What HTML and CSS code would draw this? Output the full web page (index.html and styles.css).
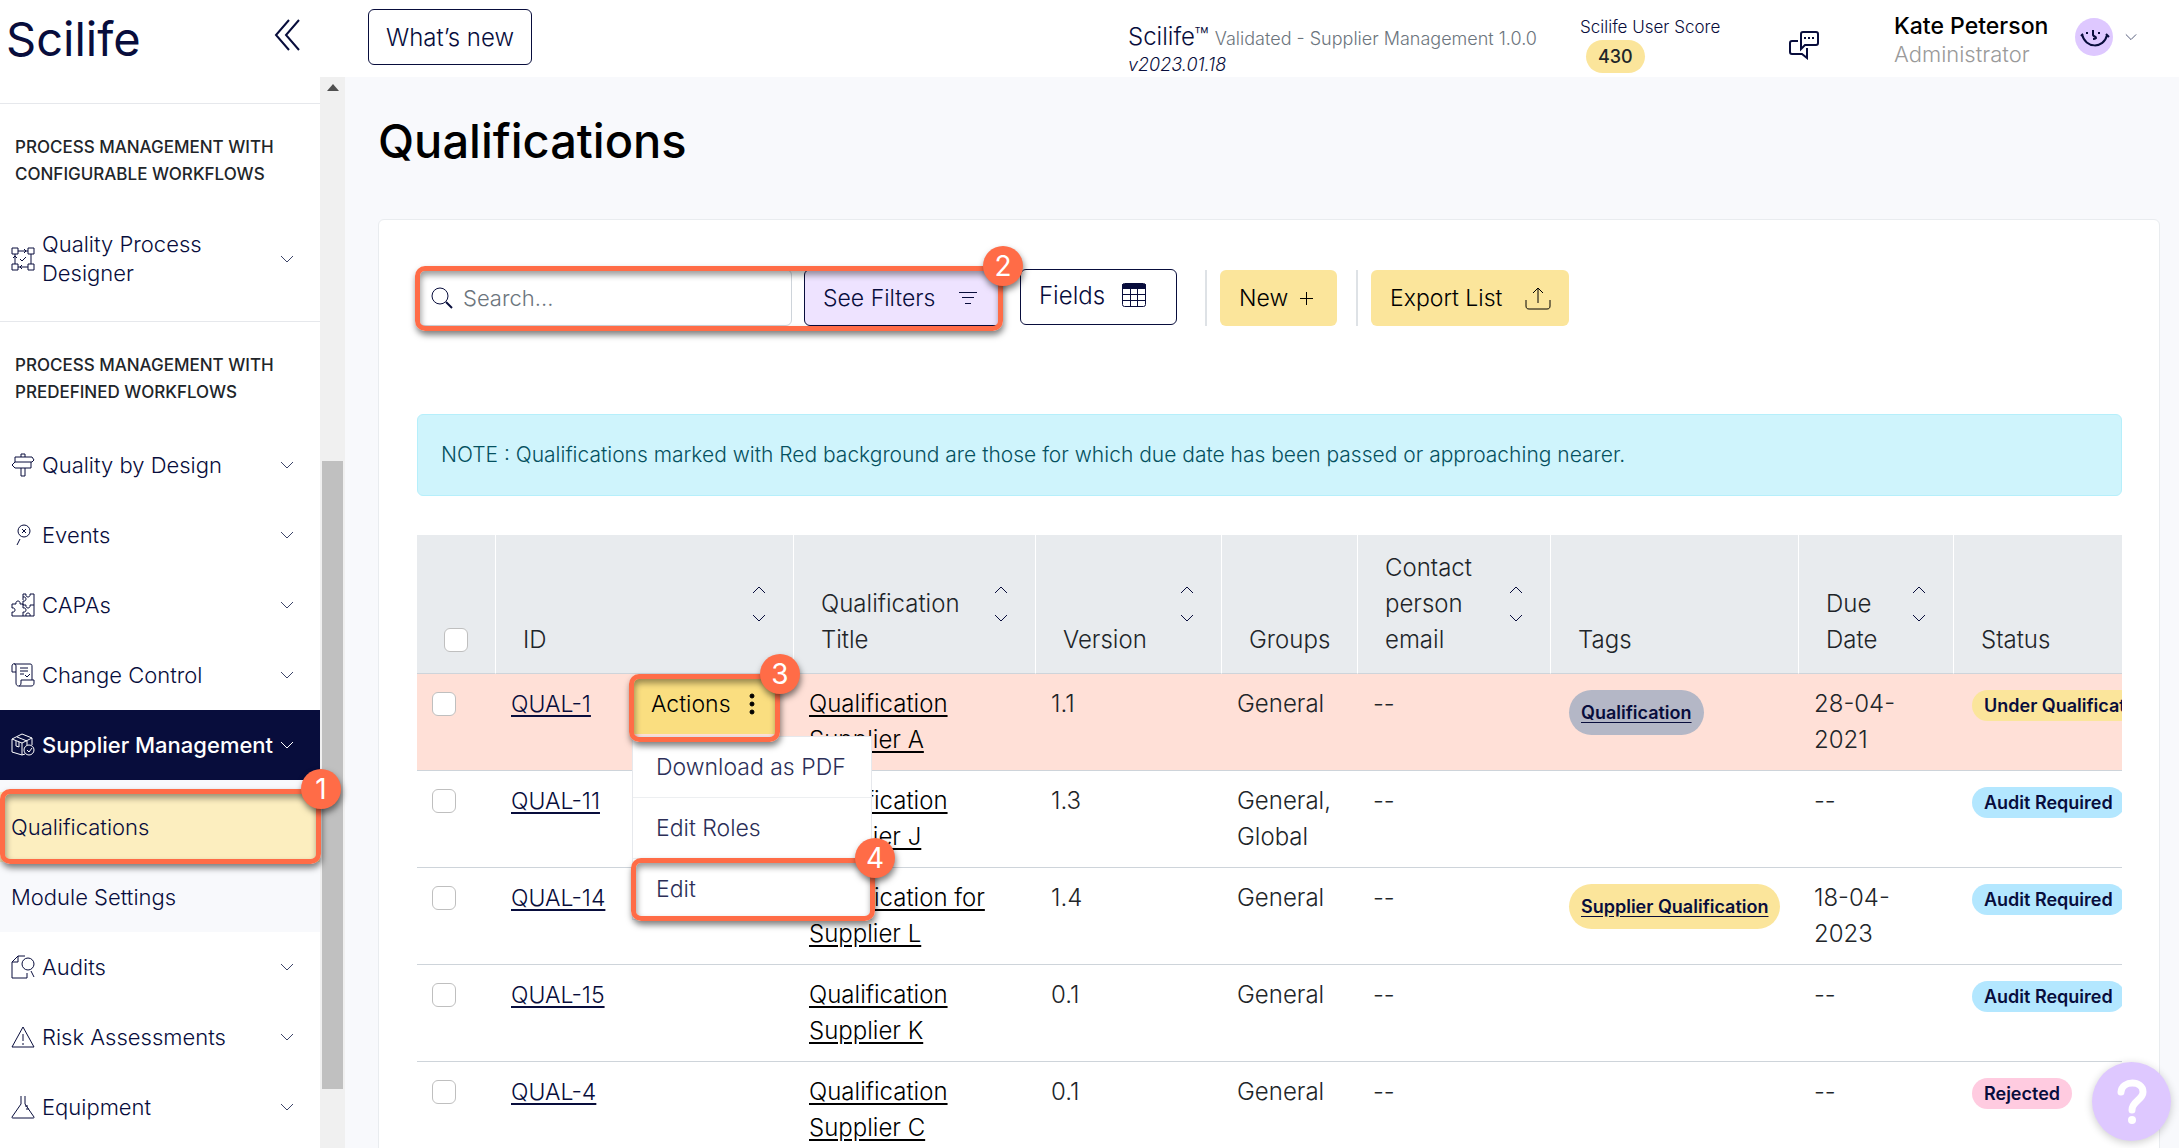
FILE: index.html
```html
<!DOCTYPE html>
<html lang="en">

<head>
    <meta charset="UTF-8">
    <meta name="viewport" content="width=device-width, initial-scale=1.0">
    <title>Scilife - Qualifications</title>
    <link rel="stylesheet" href="styles.css">
</head>

<body>
    <!-- shared icon shapes -->
    <svg class="sprite" width="0" height="0" aria-hidden="true">
        <symbol id="down" viewBox="0 0 14 8"><path d="M1 1l6 6 6-6" /></symbol>
        <symbol id="up" viewBox="0 0 14 8"><path d="M1 7l6-6 6 6" /></symbol>
    </svg>

    <header class="topbar">
        <div class="brand">
            <a href="#" class="logo">Scilife</a>
            <button class="icon-button" aria-label="Collapse menu">
                <svg width="26" height="32" viewBox="0 0 26 32"><path d="M15 1L2 16l13 15M25 1L12 16l13 15" /></svg>
            </button>
        </div>
        <button class="outline-button whats-new">What’s new</button>
        <div class="version">
            <div><span class="version-name">Scilife™</span> <span class="validated">Validated - Supplier Management 1.0.0</span></div>
            <em>v2023.01.18</em>
        </div>
        <div class="score">
            <div>Scilife User Score</div>
            <span class="score-value">430</span>
        </div>
        <button class="icon-button chat" aria-label="Messages">
            <svg width="32" height="30" viewBox="0 0 32 30">
                <path d="M15 2h13a2 2 0 0 1 2 2v9a2 2 0 0 1-2 2H17l-4 4V4a2 2 0 0 1 2-2z" />
                <path d="M10 11H4a2 2 0 0 0-2 2v9a2 2 0 0 0 2 2h10l5 4V18" />
                <path class="dots" d="M16 8h2M20 8h2M24 8h2" />
            </svg>
        </button>
        <div class="user">
            <div class="user-name">Kate Peterson</div>
            <div class="user-role">Administrator</div>
        </div>
        <button class="icon-button account" aria-label="Account">
            <svg class="avatar" width="38" height="38" viewBox="0 0 38 38">
                <circle cx="19" cy="19" r="19" />
                <path d="M6 18l2-2M31 16l3 3M7 16c3 15 22 15 25 1M12 14v2M24 14v2M18 12v5c1 2 3 1 3 3-1 1-2 1-3 1" />
            </svg>
            <svg class="chevron" width="12" height="8"><use href="#down" /></svg>
        </button>
    </header>

    <div class="page">
        <nav class="sidebar">
            <div class="menu-group">
                <h2>Process management with configurable workflows</h2>
                <a href="#" class="menu-item tall">
                    <svg width="24" height="24" viewBox="0 0 24 24"><path d="M1 1h6v6H1zM17 1h6v6h-6zM1 17h6v6H1zM17 17h6v6h-6zM7 4h10M13 2l2 2-2 2M20 7v10M17 20H7M11 18l-2 2 2 2M4 17V7M2 11l2-2 2 2M9 12l2 2 4-4" /></svg>
                    <span>Quality Process Designer</span>
                    <svg class="chevron" width="14" height="8"><use href="#down" /></svg>
                </a>
            </div>
            <div class="menu-group">
                <h2>Process management with predefined workflows</h2>
                <a href="#" class="menu-item">
                    <svg width="24" height="24" viewBox="0 0 24 24"><path d="M10 4V1h4v3M4 4h17l2 3-2 2H4zM20 9v6H4l-3-3 3-3M10 15v8h4v-8" /></svg>
                    <span>Quality by Design</span>
                    <svg class="chevron" width="14" height="8"><use href="#down" /></svg>
                </a>
                <a href="#" class="menu-item">
                    <svg width="24" height="24" viewBox="0 0 24 24"><circle cx="13" cy="8" r="6" /><path d="M11 6l4 4M15 6l-4 4M9 16l-3 6" /></svg>
                    <span>Events</span>
                    <svg class="chevron" width="14" height="8"><use href="#down" /></svg>
                </a>
                <a href="#" class="menu-item">
                    <svg width="24" height="24" viewBox="0 0 24 24"><path d="M12 7V1h3c-1 4 5 4 4 0h4v22H1v-4c4 1 4-5 0-4v-4h4c-1-4 5-4 4 0h3v4c4-1 4 5 0 4v4M12 12h3c-1 4 5 4 4 0h4M15 23c-1-4 5-4 4 0M12 4c4-1 4 5 0 4v4" /></svg>
                    <span>CAPAs</span>
                    <svg class="chevron" width="14" height="8"><use href="#down" /></svg>
                </a>
                <a href="#" class="menu-item">
                    <svg width="24" height="24" viewBox="0 0 24 24"><path d="M5 9H1V3c0-3 4-3 4 0v17c0 4 5 4 5 0v-3h13v3c0 2-1 3-3 3H8M3 1h16c2 0 2 1 2 3v13M9 5h8M9 8h8M9 11h4M14 12l2 2 3-3" /></svg>
                    <span>Change Control</span>
                    <svg class="chevron" width="14" height="8"><use href="#down" /></svg>
                </a>
                <a href="#" class="menu-item active">
                    <svg width="24" height="24" viewBox="0 0 24 24"><path d="M1 6l10-5 10 4-10 5zM1 6v13l10 3V10M21 5v7M6 4l10 4v4M5 8v5l3 1V9M11 22l3-1" /><circle cx="18" cy="17" r="5" /><path d="M16 17l2 2 3-4" /></svg>
                    <span>Supplier Management</span>
                    <svg class="chevron" width="14" height="8"><use href="#down" /></svg>
                </a>
                <div class="submenu">
                    <a href="#" class="current">Qualifications
                        <span class="callout"><b>1</b></span>
                    </a>
                    <a href="#">Module Settings</a>
                </div>
                <a href="#" class="menu-item">
                    <svg width="24" height="24" viewBox="0 0 24 24"><path d="M14 1H7L1 7v16h15v-5M7 1v6H1" /><circle cx="17" cy="9" r="6" /><path d="M20 16l3 6" /></svg>
                    <span>Audits</span>
                    <svg class="chevron" width="14" height="8"><use href="#down" /></svg>
                </a>
                <a href="#" class="menu-item">
                    <svg width="24" height="24" viewBox="0 0 24 24"><path d="M12 2L1 22h22zM12 9v7M12 18v2" /></svg>
                    <span>Risk Assessments</span>
                    <svg class="chevron" width="14" height="8"><use href="#down" /></svg>
                </a>
                <a href="#" class="menu-item">
                    <svg width="24" height="24" viewBox="0 0 24 24"><path d="M10 1v8L1 22c0 1 0 1 1 1h20c1 0 1 0 1-1L14 9V1M14 11h3M15 14h3" /></svg>
                    <span>Equipment</span>
                    <svg class="chevron" width="14" height="8"><use href="#down" /></svg>
                </a>
            </div>
        </nav>
        <div class="scrollbar">
            <svg width="12" height="8" viewBox="0 0 12 8"><path d="M0 8l6-7 6 7z" /></svg>
            <div class="thumb"></div>
        </div>

        <main class="content">
            <h1>Qualifications</h1>
            <section class="card">
                <div class="toolbar">
                    <div class="filters">
                        <label class="search">
                            <svg width="22" height="22" viewBox="0 0 22 22"><circle cx="9" cy="9" r="8" /><path class="handle" d="M15 15l6 6" /></svg>
                            <input type="text" placeholder="Search..." aria-label="Search">
                        </label>
                        <button class="see-filters">See Filters
                            <svg width="18" height="14" viewBox="0 0 18 14"><path d="M0 1.5h18M3 6.5h12M6 12.5h6" /></svg>
                        </button>
                        <span class="callout"><b>2</b></span>
                    </div>
                    <button class="outline-button fields">Fields
                        <svg width="26" height="26" viewBox="0 0 26 26"><rect x="1.5" y="1.5" width="23" height="23" rx="2" /><path class="solid" d="M1.5 2.5h23v4h-23z" /><path d="M1 12.5h24M1 18.5h24M9.5 7v18M16.5 7v18" /></svg>
                    </button>
                    <span class="divider"></span>
                    <button class="yellow-button">New
                        <svg width="13" height="13" viewBox="0 0 13 13"><path d="M6.5 0v13M0 6.5h13" /></svg>
                    </button>
                    <span class="divider"></span>
                    <button class="yellow-button export">Export List
                        <svg width="26" height="24" viewBox="0 0 26 24"><path d="M13 17V2M8 7l5-5 5 5M1 14v6c0 2 1 3 3 3h18c2 0 3-1 3-3v-6" /></svg>
                    </button>
                </div>

                <p class="note">NOTE : Qualifications marked with Red background are those for which due date has been passed or approaching nearer.</p>

                <div class="table-wrap">
                    <table>
                        <colgroup>
                            <col class="col-check">
                            <col class="col-id">
                            <col class="col-title">
                            <col class="col-version">
                            <col class="col-groups">
                            <col class="col-email">
                            <col class="col-tags">
                            <col class="col-due">
                            <col class="col-status">
                        </colgroup>
                        <thead>
                            <tr>
                                <th><input type="checkbox" aria-label="Select all"></th>
                                <th><div class="head">ID <button class="sort" aria-label="Sort by ID"><svg width="16" height="8"><use href="#up" /></svg><svg width="16" height="8"><use href="#down" /></svg></button></div></th>
                                <th><div class="head">Qualification Title <button class="sort" aria-label="Sort by title"><svg width="16" height="8"><use href="#up" /></svg><svg width="16" height="8"><use href="#down" /></svg></button></div></th>
                                <th><div class="head">Version <button class="sort" aria-label="Sort by version"><svg width="16" height="8"><use href="#up" /></svg><svg width="16" height="8"><use href="#down" /></svg></button></div></th>
                                <th>Groups</th>
                                <th><div class="head">Contact person email <button class="sort" aria-label="Sort by email"><svg width="16" height="8"><use href="#up" /></svg><svg width="16" height="8"><use href="#down" /></svg></button></div></th>
                                <th>Tags</th>
                                <th><div class="head">Due Date <button class="sort" aria-label="Sort by due date"><svg width="16" height="8"><use href="#up" /></svg><svg width="16" height="8"><use href="#down" /></svg></button></div></th>
                                <th>Status</th>
                            </tr>
                        </thead>
                        <tbody>
                            <tr class="overdue">
                                <td><input type="checkbox" aria-label="Select QUAL-1"></td>
                                <td>
                                    <div class="id-cell">
                                        <a href="#" class="id-link">QUAL-1</a>
                                        <div class="actions">
                                            <button class="actions-button">Actions
                                                <svg width="6" height="22" viewBox="0 0 6 22"><circle cx="3" cy="3" r="2" /><circle cx="3" cy="11" r="2" /><circle cx="3" cy="19" r="2" /></svg>
                                            </button>
                                            <div class="actions-menu">
                                                <a href="#">Download as PDF</a>
                                                <a href="#">Edit Roles</a>
                                                <a href="#">Edit
                                                    <span class="callout"><b>4</b></span>
                                                </a>
                                            </div>
                                            <span class="callout"><b>3</b></span>
                                        </div>
                                    </div>
                                </td>
                                <td><a href="#">Qualification Supplier A</a></td>
                                <td>1.1</td>
                                <td>General</td>
                                <td>--</td>
                                <td><a href="#" class="tag grey">Qualification</a></td>
                                <td class="due">28-04-2021</td>
                                <td><span class="status yellow">Under Qualification</span></td>
                            </tr>
                            <tr>
                                <td><input type="checkbox" aria-label="Select QUAL-11"></td>
                                <td><a href="#" class="id-link">QUAL-11</a></td>
                                <td><a href="#">Qualification Supplier J</a></td>
                                <td>1.3</td>
                                <td>General, Global</td>
                                <td>--</td>
                                <td></td>
                                <td class="due">--</td>
                                <td><span class="status blue">Audit Required</span></td>
                            </tr>
                            <tr>
                                <td><input type="checkbox" aria-label="Select QUAL-14"></td>
                                <td><a href="#" class="id-link">QUAL-14</a></td>
                                <td><a href="#">Qualification for Supplier L</a></td>
                                <td>1.4</td>
                                <td>General</td>
                                <td>--</td>
                                <td><a href="#" class="tag yellow">Supplier Qualification</a></td>
                                <td class="due">18-04-2023</td>
                                <td><span class="status blue">Audit Required</span></td>
                            </tr>
                            <tr>
                                <td><input type="checkbox" aria-label="Select QUAL-15"></td>
                                <td><a href="#" class="id-link">QUAL-15</a></td>
                                <td><a href="#">Qualification Supplier K</a></td>
                                <td>0.1</td>
                                <td>General</td>
                                <td>--</td>
                                <td></td>
                                <td class="due">--</td>
                                <td><span class="status blue">Audit Required</span></td>
                            </tr>
                            <tr>
                                <td><input type="checkbox" aria-label="Select QUAL-4"></td>
                                <td><a href="#" class="id-link">QUAL-4</a></td>
                                <td><a href="#">Qualification Supplier C</a></td>
                                <td>0.1</td>
                                <td>General</td>
                                <td>--</td>
                                <td></td>
                                <td class="due">--</td>
                                <td><span class="status pink">Rejected</span></td>
                            </tr>
                        </tbody>
                    </table>
                </div>
            </section>
        </main>
    </div>

    <button class="help" aria-label="Help">
        <svg width="32" height="46" viewBox="0 0 32 46"><path d="M5 13C6 1 27 1 27 13c0 8-11 9-11 18" /><circle cx="16" cy="41" r="4" /></svg>
    </button>
</body>

</html>
```
FILE: styles.css
```css
* {
    box-sizing: border-box;
}

body {
    margin: 0;
    height: 100vh;
    overflow: hidden;
    display: flex;
    flex-direction: column;
    font-family: Inter, "Liberation Sans", sans-serif;
    font-size: 22px;
    font-weight: 300;
    color: #212529;
    background-color: #f8f9fc;
}

button,
input {
    font: inherit;
}

button {
    cursor: pointer;
}

a {
    color: #080d3c;
}

svg {
    fill: none;
    stroke: currentColor;
    flex-shrink: 0;
}

.sprite {
    position: absolute;
}

.topbar {
    display: flex;
    height: 77px;
    flex-shrink: 0;
    background-color: #fff;
    color: #080d3c;
}

.brand {
    width: 320px;
    padding: 0 20px 0 6px;
    display: flex;
    justify-content: space-between;
    align-items: flex-start;
}

.logo {
    font-size: 47px;
    line-height: 77px;
    font-weight: 400;
    text-decoration: none;
}

.icon-button {
    border: none;
    background: none;
    padding: 0;
    color: #080d3c;
}

.brand .icon-button {
    margin-top: 19px;
    stroke-width: 2;
}

.outline-button {
    height: 56px;
    background-color: #fff;
    border: 1px solid #080d3c;
    border-radius: 6px;
    color: #080d3c;
    font-size: 24px;
}

.whats-new {
    width: 164px;
    margin: 9px auto 0 48px;
    padding: 0;
    white-space: nowrap;
}

.version {
    width: 452px;
    padding-top: 24px;
    line-height: 26px;
    white-space: nowrap;
}

.version-name {
    font-size: 24px;
}

.validated {
    font-size: 18px;
    color: #6c757d;
}

.version em {
    display: block;
    font-size: 18px;
}

.score {
    width: 208px;
    padding-top: 14px;
    font-size: 17px;
    line-height: 26px;
}

.score-value {
    display: inline-block;
    margin-left: 6px;
    padding: 0 12px;
    line-height: 33px;
    border-radius: 17px;
    background-color: #fbe59b;
    font-size: 18px;
    font-weight: 500;
    color: #212529;
}

.chat {
    width: 106px;
    padding-top: 18px;
    text-align: left;
    stroke-width: 2;
}

.user {
    width: 181px;
    padding-top: 12px;
    line-height: 28px;
    white-space: nowrap;
}

.user-name {
    font-size: 23px;
    font-weight: 500;
    color: #000;
}

.user-role {
    color: #9a9a9a;
}

.account {
    display: flex;
    align-items: center;
    gap: 12px;
    width: 104px;
    padding-bottom: 4px;
}

.avatar circle {
    fill: #dec8ff;
    stroke: none;
}

.avatar path {
    stroke-width: 2;
}

.page {
    display: flex;
    flex: 1;
    min-height: 0;
}

.sidebar {
    width: 320px;
    flex-shrink: 0;
    background-color: #fff;
    padding-top: 26px;
    position: relative;
}

.menu-group {
    border-top: 1px solid #e6e8ec;
    padding-top: 30px;
}

.menu-group h2 {
    margin: 0;
    padding: 0 30px 0 15px;
    font-size: 17px;
    line-height: 27px;
    font-weight: 500;
    text-transform: uppercase;
}

.menu-item {
    display: flex;
    align-items: center;
    gap: 7px;
    height: 70px;
    padding: 0 26px 0 11px;
    text-decoration: none;
    line-height: 29px;
}

.menu-group h2 + .menu-item {
    margin-top: 24px;
}

.menu-item.tall {
    height: 94px;
    margin-bottom: 15px;
}

.menu-item span {
    flex: 1;
}

.menu-item.active {
    background-color: #080d3c;
    color: #fff;
    font-weight: 500;
    white-space: nowrap;
}

.chevron {
    color: #3c4468;
}

.active .chevron {
    color: #fff;
}

.submenu {
    padding-top: 12px;
    background-color: #f8f9fc;
}

.submenu a {
    display: block;
    position: relative;
    padding-left: 11px;
    line-height: 70px;
    text-decoration: none;
}

.submenu .current {
    background-color: #fceebf;
}

/* numbered highlight boxes */
.callout {
    position: absolute;
    inset: -3px -1px -2px 0;
    border: 5px solid #ff6c47;
    border-radius: 10px;
    box-shadow: 1px 4px 6px rgba(0, 0, 0, 0.5), inset 1px 4px 6px rgba(0, 0, 0, 0.4);
    pointer-events: none;
    z-index: 2;
}

.callout b {
    position: absolute;
    top: -25px;
    right: -25px;
    width: 40px;
    height: 40px;
    border-radius: 50%;
    background-color: #ff6c47;
    box-shadow: 1px 4px 6px rgba(0, 0, 0, 0.5);
    color: #fff;
    font-size: 28px;
    font-weight: 400;
    line-height: 40px;
    text-align: center;
}

.scrollbar {
    width: 25px;
    flex-shrink: 0;
    display: flex;
    flex-direction: column;
    align-items: center;
    padding-top: 6px;
    background-color: #f0f0f0;
}

.scrollbar path {
    fill: #505050;
    stroke: none;
}

.thumb {
    width: 21px;
    height: 59%;
    margin-top: auto;
    margin-bottom: 59px;
    background-color: #c0c0c0;
}

.content {
    flex: 1;
    min-width: 0;
    overflow: hidden;
    padding: 34px 19px 0 33px;
}

h1 {
    margin: 0;
    font-size: 47px;
    line-height: 60px;
    font-weight: 500;
    color: #000;
}

.card {
    margin-top: 48px;
    min-height: 100vh;
    padding: 49px 37px 0 38px;
    background-color: #fff;
    border: 1px solid #e9ecef;
    border-radius: 6px;
}

.toolbar {
    display: flex;
    align-items: flex-start;
    height: 145px;
}

.filters {
    position: relative;
    display: flex;
    gap: 12px;
    width: 585px;
    margin-right: 18px;
}

.filters .callout {
    inset: -3px -1px -5px -2px;
}

.search {
    flex: 1;
    min-width: 0;
    display: flex;
    align-items: center;
    gap: 10px;
    height: 57px;
    padding-left: 13px;
    border: 1px solid #ced4da;
    border-radius: 6px;
    color: #080d3c;
}

.search .handle {
    stroke-width: 2;
}

.search input {
    flex: 1;
    min-width: 0;
    padding: 0;
    border: none;
    outline: none;
    background: none;
}

.search input::placeholder {
    color: #6c757d;
}

.see-filters {
    display: flex;
    align-items: center;
    justify-content: space-between;
    width: 198px;
    height: 57px;
    padding: 0 24px 0 18px;
    background-color: #eee3ff;
    border: 1px solid #080d3c;
    border-radius: 6px;
    color: #080d3c;
    font-size: 23px;
    white-space: nowrap;
}

.fields {
    display: flex;
    align-items: center;
    justify-content: space-between;
    width: 157px;
    padding: 0 29px 4px 18px;
}

.fields .solid {
    fill: #080d3c;
}

.divider {
    width: 2px;
    height: 56px;
    margin: 1px 13px 0 28px;
    background-color: #dee2e6;
}

.divider + .yellow-button {
    margin-top: 1px;
}

.divider ~ .divider {
    margin-left: 19px;
}

.yellow-button {
    display: flex;
    align-items: center;
    justify-content: space-between;
    width: 117px;
    height: 56px;
    padding: 0 24px 0 19px;
    background-color: #fbe59b;
    border: none;
    border-radius: 6px;
    color: #000;
    font-size: 23px;
    white-space: nowrap;
}

.export {
    width: 198px;
    padding-right: 18px;
}

.note {
    margin: 0 0 39px;
    padding: 0 23px;
    line-height: 80px;
    border: 1px solid #b6effb;
    border-radius: 6px;
    background-color: #cff4fc;
    color: #055160;
    font-size: 21px;
}

.table-wrap {
    overflow: hidden;
}

table {
    width: 1820px;
    table-layout: fixed;
    border-collapse: separate;
    border-spacing: 0;
    font-size: 24px;
    line-height: 36px;
}

.col-check {
    width: 79px;
}

.col-id {
    width: 298px;
}

.col-title {
    width: 242px;
}

.col-version {
    width: 186px;
}

.col-groups {
    width: 136px;
}

.col-email {
    width: 193px;
}

.col-tags {
    width: 248px;
}

.col-due {
    width: 155px;
}

th {
    height: 139px;
    padding: 15px 26px 15px 27px;
    vertical-align: bottom;
    text-align: left;
    font-weight: 300;
    background-color: #e8ebee;
    border-right: 1px solid #fff;
    border-bottom: 1px solid #ced4da;
}

.head {
    display: flex;
    justify-content: space-between;
    align-items: flex-end;
    min-height: 72px;
}

.sort {
    display: flex;
    flex-direction: column;
    gap: 20px;
    margin-bottom: 36px;
    padding: 0;
    border: none;
    background: none;
    color: #080d3c;
}

td {
    height: 97px;
    padding: 12px 10px 12px 15px;
    vertical-align: top;
    border-bottom: 1px solid #ced4da;
}

td a {
    color: #000;
    text-underline-offset: 3px;
}

td .id-link {
    color: #080d3c;
    font-size: 23px;
}

.due {
    padding-right: 40px;
}

.overdue {
    background-color: #ffe0d7;
}

input[type="checkbox"] {
    appearance: none;
    display: block;
    width: 24px;
    height: 24px;
    margin: 6px 0;
    background-color: #fff;
    border: 1px solid #bfbfbf;
    border-radius: 6px;
}

.id-cell {
    display: flex;
    justify-content: space-between;
}

.actions {
    position: relative;
    width: 142px;
    margin: -8px 9px -8px 0;
}

.actions .callout {
    inset: -4px -5px -8px -4px;
}

.actions-button {
    display: flex;
    align-items: center;
    justify-content: space-between;
    width: 100%;
    height: 56px;
    padding: 0 20px 4px 18px;
    border: none;
    background-color: #fade80;
    color: #000;
    font-size: 23px;
}

.actions-button svg {
    fill: #000;
}

.actions-menu {
    position: absolute;
    top: 58px;
    left: -1px;
    z-index: 1;
    width: 240px;
    background-color: #fff;
    border: 1px solid #e6e8ec;
    font-size: 23px;
}

.actions-menu a {
    display: block;
    position: relative;
    padding-left: 23px;
    line-height: 60px;
    border-bottom: 1px solid #edeff1;
    color: #2c2f58;
    text-decoration: none;
    white-space: nowrap;
}

.actions-menu a:last-child {
    border-bottom: none;
}

.actions-menu .callout {
    inset: -1px -4px -2px -2px;
}

.tag,
.status {
    display: inline-block;
    padding: 0 12px;
    font-size: 18px;
    font-weight: 600;
    color: #080d3c;
    white-space: nowrap;
}

.tag {
    margin: 4px 0 -12px 3px;
    line-height: 45px;
    border-radius: 23px;
}

.status {
    margin-left: 3px;
    line-height: 31px;
    border-radius: 16px;
}

.grey {
    background-color: #b4b7c6;
}

.yellow {
    background-color: #fbe59b;
}

.blue {
    background-color: #b3e7ff;
}

.pink {
    background-color: #ffcbe0;
}

.help {
    position: fixed;
    right: 8px;
    bottom: 7px;
    z-index: 3;
    display: flex;
    align-items: center;
    justify-content: center;
    width: 79px;
    height: 79px;
    padding: 0;
    border: none;
    border-radius: 50%;
    background-color: #dec8ff;
    box-shadow: 0 2px 8px rgba(0, 0, 0, 0.2);
    color: #fff;
    stroke-width: 7;
    stroke-linecap: round;
}

.help circle {
    fill: #fff;
    stroke: none;
}
```
